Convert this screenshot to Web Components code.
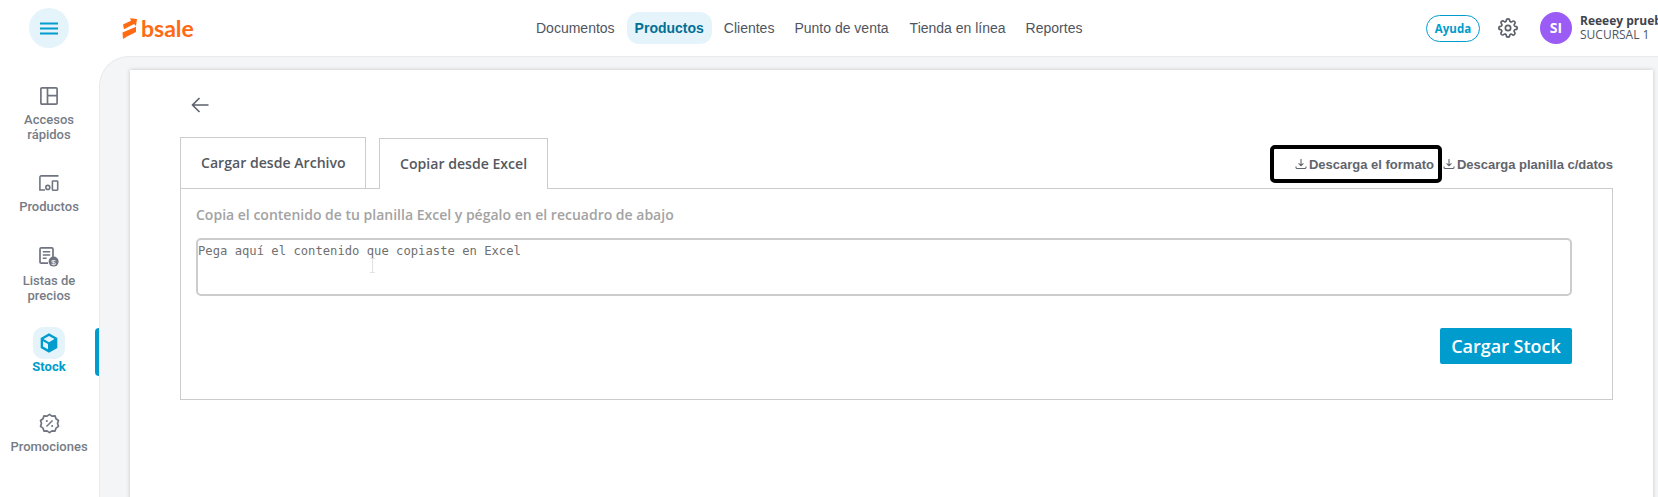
<!DOCTYPE html>
<html lang="es">
<head>
<meta charset="utf-8">
<title>Stock</title>
<style>
  html, body { margin: 0; height: 100%; overflow: hidden; background: #fff; }
  body { font-family: "Liberation Sans", Arial, sans-serif; }
</style>
</head>
<body>
<bs-app>
  <bs-header slot="header"></bs-header>
  <bs-sidebar slot="sidebar">
    <bs-side-item style="height:87px" label="Accesos rápidos" icon="grid"></bs-side-item>
    <bs-side-item style="height:74px" label="Productos" icon="devices"></bs-side-item>
    <bs-side-item style="height:82px" label="Listas de precios" icon="list"></bs-side-item>
    <bs-side-item style="height:84px" label="Stock" icon="box" active></bs-side-item>
    <bs-side-item style="height:60px" label="Promociones" icon="promo"></bs-side-item>
  </bs-sidebar>
  <bs-stock-page></bs-stock-page>
</bs-app>

<script>
// Icons used by the sidebar
const ICONS = {
  grid: '<svg width="18" height="18" viewBox="0 0 18 18" fill="none" stroke="#6f7580" stroke-width="1.7"><rect x=".9" y=".9" width="16.200" height="16.200" rx="1"/><path d="M7.500 .9v16.200M7.500 8.600h9.600"/></svg>',
  devices: '<svg width="20" height="16" viewBox="0 0 20 16" fill="none" stroke="#6f7580" stroke-width="1.6"><path d="M19.500 .9H2.200A1.300 1.300 0 0 0 .9 2.200V15H6"/><circle cx="8.800" cy="12.400" r="2"/><rect x="13.400" y="6" width="5.300" height="9.200" rx=".6"/></svg>',
  list: '<svg width="20" height="20" viewBox="0 0 20 20" fill="none"><path d="M9 16.200H2.200A1.200 1.200 0 0 1 1 15V2A1.200 1.200 0 0 1 2.200 .9h10.600A1.200 1.200 0 0 1 14 2v8" stroke="#6f7580" stroke-width="1.7"/><path d="M3.800 4.800h7.400M3.800 8h7.400M3.800 11.200h3.800" stroke="#6f7580" stroke-width="1.600"/><circle cx="14.600" cy="14.600" r="5" fill="#6f7580"/><text x="14.600" y="17.600" font-size="8" font-family="Liberation Sans" fill="#fff" text-anchor="middle">$</text></svg>',
  box: '<svg width="18" height="20" viewBox="0 0 18 20"><path d="M9 .3l8.300 4.800v9.800L9 19.700.7 14.900V5.100z" fill="#009ccd"/><path d="M9 3l5.500 3.100L9 9.300 3.500 6.100z" fill="#e4f4fa"/><path d="M3 8.200l5 2.900v5.200l-5-2.900z" fill="#e4f4fa"/></svg>',
  promo: '<svg width="21" height="21" viewBox="0 0 22 22" fill="none" stroke="#6f7580" stroke-width="1.800"><path d="M11 1.400l2.600 1.900 3.200-.3 1 3 2.600 1.900-1 3.100 1 3-2.600 1.900-1 3-3.200-.2L11 20.600l-2.600-1.900-3.200.2-1-3-2.600-1.900 1-3-1-3.100 2.600-1.900 1-3 3.200.3z" stroke-linejoin="round"/><path d="M7.800 14.200l6.400-6.400" stroke-width="1.500"/><circle cx="8.200" cy="8.400" r="1.100" fill="#6f7580" stroke="none"/><circle cx="13.800" cy="13.600" r="1.100" fill="#6f7580" stroke="none"/></svg>'
};

const DOWNLOAD_ICON = '<svg width="12" height="12" viewBox="0 0 12 12" fill="none" stroke="#5f646d" stroke-width="1.1"><path d="M6 1v6.600M3.600 5.400L6 7.800l2.400-2.400M1 8.400v1.200c0 .5.4.9.9.9h8.200c.5 0 .9-.4.9-.9V8.400"/></svg>';

// Page frame: header on top, sidebar and content below
class BsApp extends HTMLElement {
  constructor() {
    super();
    this.attachShadow({ mode: 'open' });
    this.shadowRoot.innerHTML = `
      <style>
        :host { display: grid; grid-template-columns: 99px 1fr; grid-template-rows: 56px 441px; width: 1658px; height: 497px; overflow: hidden; }
        .top { grid-column: 1 / 3; }
        .main { background: #f4f5f7; border-top: 1px solid #e9eaec; border-left: 1px solid #e9eaec; border-top-left-radius: 30px; padding: 13px 5px 0 30px; overflow: hidden; box-sizing: border-box; }
      </style>
      <div class="top"><slot name="header"></slot></div>
      <slot name="sidebar"></slot>
      <div class="main"><slot></slot></div>`;
  }
}

class BsHeader extends HTMLElement {
  constructor() {
    super();
    this.attachShadow({ mode: 'open' });
    this.shadowRoot.innerHTML = `
      <style>
        :host { display: flex; align-items: center; height: 56px; position: relative; background: #fff; font-family: "Liberation Sans", Arial, sans-serif; }
        .burger { width: 40px; height: 40px; border-radius: 50%; background: #e4f4fa; margin: 0 0 0 29px; display: flex; align-items: center; justify-content: center; flex: none; }
        .logo { display: flex; align-items: center; gap: 4px; margin-left: 53px; width: 71px; flex: none; color: #ff6a13; font: 700 23px/1 Lato, sans-serif; }
        nav { display: flex; align-items: center; margin-left: 343px; font-size: 14px; color: #4f5560; flex: none; }
        nav span { padding: 0 8px; margin-right: 4px; height: 32px; line-height: 32px; border-radius: 12px; }
        nav span:first-child { padding-left: 0; }
        nav .on { background: #e4f4fa; color: #046f94; font-weight: 700; }
        nav .wide { margin-right: 5px; }
        .right { display: flex; align-items: center; margin-left: auto; width: 232px; flex: none; white-space: nowrap; overflow: hidden; }
        .help { width: 54px; height: 27px; box-sizing: border-box; border: 1px solid #009ccd; border-radius: 14px; color: #009ccd; font: 700 11.500px/25px "Open Sans", sans-serif; text-align: center; flex: none; }
        .gear { margin-left: 18px; display: flex; flex: none; }
        .avatar { margin-left: 22px; width: 32px; height: 32px; border-radius: 50%; background: #9a5cf5; color: #fff; font: 700 14px/32px "Open Sans", sans-serif; text-align: center; flex: none; }
        .user { margin-left: 8px; font: 12px/14px "Open Sans", sans-serif; color: #4f5560; flex: none; }
        .user b { display: block; font-size: 12px; color: #3f444d; }
      </style>
      <div class="burger">
        <svg width="18" height="13" viewBox="0 0 18 13" fill="none" stroke="#009ccd" stroke-width="2"><path d="M0 1.500h18M0 6.500h18M0 11.500h18"/></svg>
      </div>
      <div class="logo">
        <svg width="15" height="21" viewBox="0 0 15 21" style="flex:none"><path d="M1 6.500L9 2.800 8 .3 15 1l-1 7-2-2-10 5.300z" fill="#ff6a13"/><path d="M.5 14.500L14 8.800V14l-9 4.500L1 21z" fill="#ff6a13"/></svg>
        <span>bsale</span>
      </div>
      <nav>
        <span>Documentos</span><span class="on">Productos</span><span>Clientes</span><span class="wide">Punto de venta</span><span>Tienda en línea</span><span>Reportes</span>
      </nav>
      <div class="right">
        <div class="help">Ayuda</div>
        <div class="gear">
          <svg width="20" height="20" viewBox="0 0 24 24" fill="none" stroke="#5a5f68" stroke-width="2" stroke-linejoin="round"><circle cx="12" cy="12" r="3.200"/><path d="M19.400 15a1.700 1.700 0 0 0 .3 1.800l.1.100a2 2 0 1 1-2.900 2.900l-.1-.1a1.700 1.700 0 0 0-2.800 1.200V21a2 2 0 1 1-4 0v-.1a1.700 1.700 0 0 0-2.900-1.200l-.1.100a2 2 0 1 1-2.900-2.900l.1-.1a1.700 1.700 0 0 0-1.200-2.800H3a2 2 0 1 1 0-4h.1a1.700 1.700 0 0 0 1.200-2.900l-.1-.1a2 2 0 1 1 2.900-2.900l.1.100a1.700 1.700 0 0 0 1.800.3H9a1.700 1.700 0 0 0 1-1.500V3a2 2 0 1 1 4 0v.1a1.700 1.700 0 0 0 2.900 1.200l.1-.1a2 2 0 1 1 2.900 2.900l-.1.100a1.700 1.700 0 0 0-.3 1.800V9a1.700 1.700 0 0 0 1.500 1H21a2 2 0 1 1 0 4h-.1a1.700 1.700 0 0 0-1.500 1z"/></svg>
        </div>
        <div class="avatar">SI</div>
        <div class="user"><b>Reeeey prueba</b>SUCURSAL 1</div>
      </div>`;
  }
}

class BsSidebar extends HTMLElement {
  constructor() {
    super();
    this.attachShadow({ mode: 'open' });
    this.shadowRoot.innerHTML = `
      <style>
        :host { display: flex; flex-direction: column; align-items: stretch; padding-top: 28px; background: #fff; position: relative; }
      </style>
      <slot></slot>`;
  }
}

class BsSideItem extends HTMLElement {
  connectedCallback() {
    if (this.shadowRoot) return;
    this.attachShadow({ mode: 'open' });
    const active = this.hasAttribute('active');
    this.shadowRoot.innerHTML = `
      <style>
        :host { display: block; flex: none; position: relative; box-sizing: border-box; text-align: center; font: 500 13px/14.500px Roboto, sans-serif; color: #777c86; }
        :host([active]) { color: #009ccd; font-weight: 700; }
        .ico { height: 24px; width: 32px; margin: 0 0 5px 33px; display: flex; align-items: center; justify-content: center; border-radius: 10px; }
        :host([active]) .ico { height: 32px; background: #e4f4fa; margin-bottom: 1px; }
        .lbl { width: 80px; margin: 0 0 0 9px; }
        .bar { position: absolute; right: 0; top: 1px; width: 4px; height: 48px; background: #009ccd; border-radius: 4px 0 0 4px; }
      </style>
      <div class="ico">${ICONS[this.getAttribute('icon')]}</div>
      <div class="lbl">${this.getAttribute('label')}</div>
      ${active ? '<div class="bar"></div>' : ''}`;
  }
}

// The tabs with the download links on their right
class BsTabs extends HTMLElement {
  constructor() {
    super();
    this.attachShadow({ mode: 'open' });
    this.shadowRoot.innerHTML = `
      <style>
        :host { display: flex; align-items: flex-end; height: 52px; font: 600 14.100px/20px "Open Sans", sans-serif; color: #55595f; }
        .tab { box-sizing: border-box; border: 1px solid #ccc; border-bottom: 0; background: #fff; padding: 0 20px; display: flex; align-items: center; position: relative; white-space: nowrap; margin-bottom: -1px; }
        .a { width: 186px; height: 52px; margin-right: 13px; border-bottom: 1px solid #ccc; }
        .b { width: 169px; height: 51px; z-index: 1; }
        .links { margin-left: auto; display: flex; align-items: center; height: 38px; margin-bottom: 5px; font: 700 13px/1 "Liberation Sans", Arial, sans-serif; color: #5f646d; }
        .link { display: flex; align-items: center; gap: 2px; white-space: nowrap; }
        .boxed { box-sizing: border-box; width: 172px; height: 38px; border: 4px solid #000; border-radius: 5px; justify-content: flex-end; padding-right: 4px; margin-right: 1px; }
      </style>
      <div class="tab a">Cargar desde Archivo</div>
      <div class="tab b">Copiar desde Excel</div>
      <div class="links">
        <div class="link boxed">${DOWNLOAD_ICON}<span>Descarga el formato</span></div>
        <div class="link">${DOWNLOAD_ICON}<span>Descarga planilla c/datos</span></div>
      </div>`;
  }
}

class BsStockPage extends HTMLElement {
  constructor() {
    super();
    this.attachShadow({ mode: 'open' });
    this.shadowRoot.innerHTML = `
      <style>
        :host { display: block; background: #fff; height: 460px; box-shadow: 0 0 4px rgba(0,0,0,.2); padding: 23px 40px 0 50px; box-sizing: border-box; font-family: "Open Sans", sans-serif; }
        .back { height: 24px; margin: 0 0 19px; padding-left: 11px; display: flex; align-items: center; }
        .panel { box-sizing: border-box; height: 212px; border: 1px solid #ccc; padding: 16px 40px 0 15px; }
        .hint { font: 600 14px/20px "Open Sans", sans-serif; color: #a3a3a3; }
        .box { box-sizing: border-box; position: relative; height: 58px; margin-top: 13px; border: 2px solid #ccc; border-radius: 5px; padding: 4px 0; font: 12.200px/14px "DejaVu Sans Mono", monospace; color: #707070; white-space: pre; }
        .cursor { position: absolute; left: 171px; top: 18px; }
        .foot { display: flex; justify-content: flex-end; margin-top: 32px; }
        .btn { width: 132px; height: 36px; background: #009ccd; border-radius: 2px; color: #fff; font: 600 18px/36px "Open Sans", sans-serif; text-align: center; }
      </style>
      <div class="back">
        <svg width="18" height="16" viewBox="0 0 18 16" fill="none" stroke="#5b606b" stroke-width="1.600"><path d="M17.500 8H1.500M8.500 1L1.500 8l7 7"/></svg>
      </div>
      <bs-tabs></bs-tabs>
      <div class="panel">
        <div class="hint">Copia el contenido de tu planilla Excel y pégalo en el recuadro de abajo</div>
        <div class="box" role="textbox">Pega aquí el contenido que copiaste en Excel<svg class="cursor" width="7" height="15" viewBox="0 0 7 15" fill="none" stroke="#e2e2e2"><path d="M1 .5h5M3.500 .5v14M1 14.500h5"/></svg></div>
        <div class="foot"><div class="btn">Cargar Stock</div></div>
      </div>`;
  }
}

customElements.define('bs-app', BsApp);
customElements.define('bs-header', BsHeader);
customElements.define('bs-sidebar', BsSidebar);
customElements.define('bs-side-item', BsSideItem);
customElements.define('bs-tabs', BsTabs);
customElements.define('bs-stock-page', BsStockPage);
</script>
</body>
</html>
